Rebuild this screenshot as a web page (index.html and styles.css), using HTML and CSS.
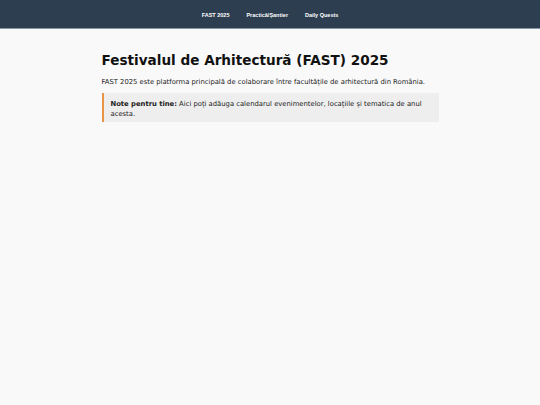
FILE: index.html
```html
<!DOCTYPE html>
<html lang="ro">
<head>
<meta charset="utf-8">
<title>FAST 2025</title>
<link rel="stylesheet" href="styles.css">
</head>
<body>
<header class="topbar">
  <nav class="nav">
    <a class="nav-link" href="#">FAST 2025</a>
    <a class="nav-link" href="#">Practică/Șantier</a>
    <a class="nav-link" href="#">Daily Quests</a>
  </nav>
</header>
<main class="content">
  <h1 class="title">Festivalul de Arhitectură (FAST) 2025</h1>
  <p class="lead">FAST 2025 este platforma principală de colaborare între facultățile de arhitectură din România.</p>
  <div class="note"><strong>Note pentru tine:</strong> Aici poți adăuga calendarul evenimentelor, locațiile și tematica de anul acesta.</div>
</main>
</body>
</html>
```
FILE: styles.css
```css
html, body {
  margin: 0;
  padding: 0;
}
body {
  background: #f9f9f9;
  font-family: "DejaVu Sans", Verdana, sans-serif;
  color: #222;
  min-height: 405px;
}
.topbar {
  background: #2c3e50;
  height: 28px;
  border-bottom: 1px solid #8a97a6;
}
.nav {
  display: flex;
  justify-content: center;
  align-items: center;
  gap: 17px;
  height: 29px;
}
.nav-link {
  color: #fff;
  text-decoration: none;
  font-family: "Liberation Sans", Arial, sans-serif;
  font-weight: bold;
  font-size: 5.5px;
}
.content {
  width: 337px;
  margin: 0 auto;
  padding-top: 23px;
}
.title {
  font-size: 13.6px;
  line-height: 16px;
  font-weight: bold;
  margin: 0 0 10px 0;
  color: #111;
}
.lead {
  font-size: 6.8px;
  line-height: 8px;
  margin: 0 0 7px 0;
}
.note {
  background: #eeeeee;
  border-left: 2px solid #e8954a;
  padding: 6px 8px 3px 7px;
  font-size: 6.8px;
  line-height: 10px;
}
```
